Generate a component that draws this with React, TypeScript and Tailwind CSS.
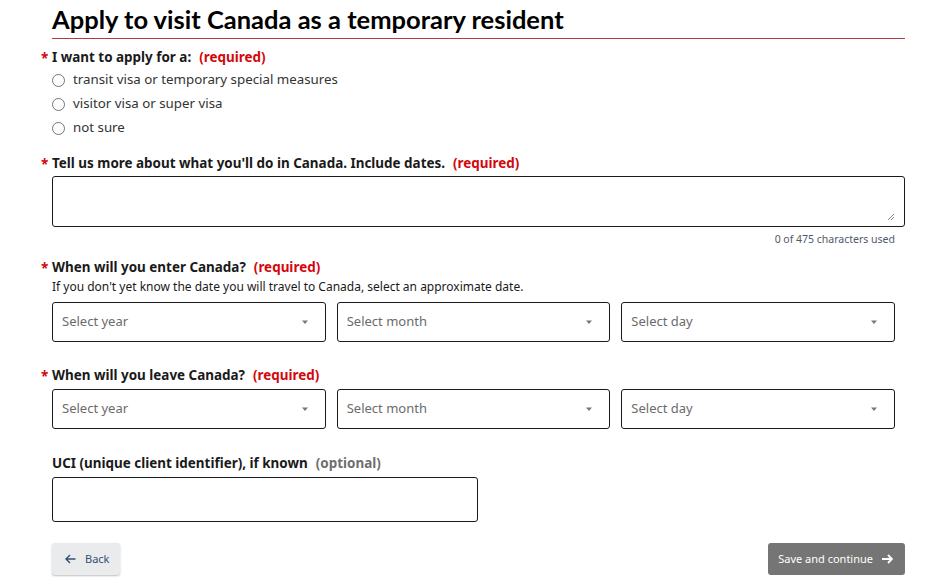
import React from 'react';

const body = { fontFamily: '"Noto Sans", "Open Sans", sans-serif' };

function Label({ text, required = true }: { text: string; required?: boolean }) {
  return (
    <div className="relative h-[20px] flex items-center text-[13.45px] font-bold text-[#1a1a1a]">
      {required && <span className="absolute -left-[11px] top-[1px] text-[#d3080c]">*</span>}
      <span>{text}</span>
      {required ? (
        <span className="ml-2 text-[#d3080c]">(required)</span>
      ) : (
        <span className="ml-2 text-[#6f6f6f]">(optional)</span>
      )}
    </div>
  );
}

function Radio({ text }: { text: string }) {
  return (
    <label className="flex items-center h-[24px] text-[13.3px] text-[#333]">
      <span className="w-[13px] h-[13px] rounded-full border border-[#767676] bg-white mr-[8px]" />
      {text}
    </label>
  );
}

function Select({ placeholder }: { placeholder: string }) {
  return (
    <div className="flex-1 h-[40px] border border-[#1a1a1a] rounded-[3px] flex items-center justify-between pl-[9px] pr-[16px] text-[13px] text-[#6b6b6b]">
      <span>{placeholder}</span>
      <svg width="8" height="5" viewBox="0 0 8 5">
        <path d="M1 0.5h6L4 4z" fill="#777" />
      </svg>
    </div>
  );
}

function DateRow() {
  return (
    <div className="flex gap-[11px] w-[843px]">
      <Select placeholder="Select year" />
      <Select placeholder="Select month" />
      <Select placeholder="Select day" />
    </div>
  );
}

export default function App() {
  return (
    <div className="min-h-screen bg-white" style={body}>
      <div className="pl-[52px] pr-[20px]">
        <h1
          className="text-[25.5px] font-bold text-black leading-[32px] pt-[3px] pb-[3px] border-b border-b-[#af3c43] w-[853px]"
          style={{ fontFamily: 'Lato, "Noto Sans", sans-serif' }}
        >
          Apply to visit Canada as a temporary resident
        </h1>

        <div className="mt-[8px]">
          <Label text="I want to apply for a:" />
          <div className="mt-[1px]">
            <Radio text="transit visa or temporary special measures" />
            <Radio text="visitor visa or super visa" />
            <Radio text="not sure" />
          </div>
        </div>

        <div className="mt-[13px]">
          <Label text="Tell us more about what you'll do in Canada. Include dates." />
          <div className="mt-[3px] w-[853px] h-[51px] border border-[#1a1a1a] rounded-[3px] relative">
            <svg className="absolute right-[9px] bottom-[5px]" width="8" height="8" viewBox="0 0 8 8">
              <path d="M7 1L1 7M7 4L4 7" stroke="#888" strokeWidth="1" />
            </svg>
          </div>
          <div className="w-[843px] text-right text-[10.5px] text-[#4f5a6b] mt-[5px] leading-[14px]">
            0 of 475 characters used
          </div>
        </div>

        <div className="mt-[11px]">
          <Label text="When will you enter Canada?" />
          <div className="text-[12px] text-[#1a1a1a] h-[20px] leading-[20px]">
            If you don't yet know the date you will travel to Canada, select an approximate date.
          </div>
          <div className="mt-[5px]">
            <DateRow />
          </div>
        </div>

        <div className="mt-[23px]">
          <Label text="When will you leave Canada?" />
          <div className="mt-[4px]">
            <DateRow />
          </div>
        </div>

        <div className="mt-[24px]">
          <Label text="UCI (unique client identifier), if known" required={false} />
          <div className="mt-[4px] w-[426px] h-[45px] border border-[#1a1a1a] rounded-[3px]" />
        </div>

        <div className="mt-[21px] flex justify-between w-[853px]">
          <button className="h-[32px] pl-[13px] pr-[11px] flex items-center gap-[9px] bg-[#eaebed] rounded-[3px] text-[11px] text-[#335075] shadow-[0_1px_2px_rgba(0,0,0,0.25)]">
            <svg width="11" height="10" viewBox="0 0 11 10" fill="none">
              <path d="M10.5 5H1.5M5 1L1 5l4 4" stroke="#335075" strokeWidth="1.4" />
            </svg>
            Back
          </button>
          <button className="h-[32px] pl-[10px] pr-[12px] flex items-center gap-[8px] bg-[#757575] rounded-[3px] text-[11px] text-white">
            Save and continue
            <svg width="12" height="10" viewBox="0 0 12 10" fill="none">
              <path d="M1 5h9.5M7 1l4 4-4 4" stroke="#fff" strokeWidth="1.8" />
            </svg>
          </button>
        </div>
      </div>
    </div>
  );
}
